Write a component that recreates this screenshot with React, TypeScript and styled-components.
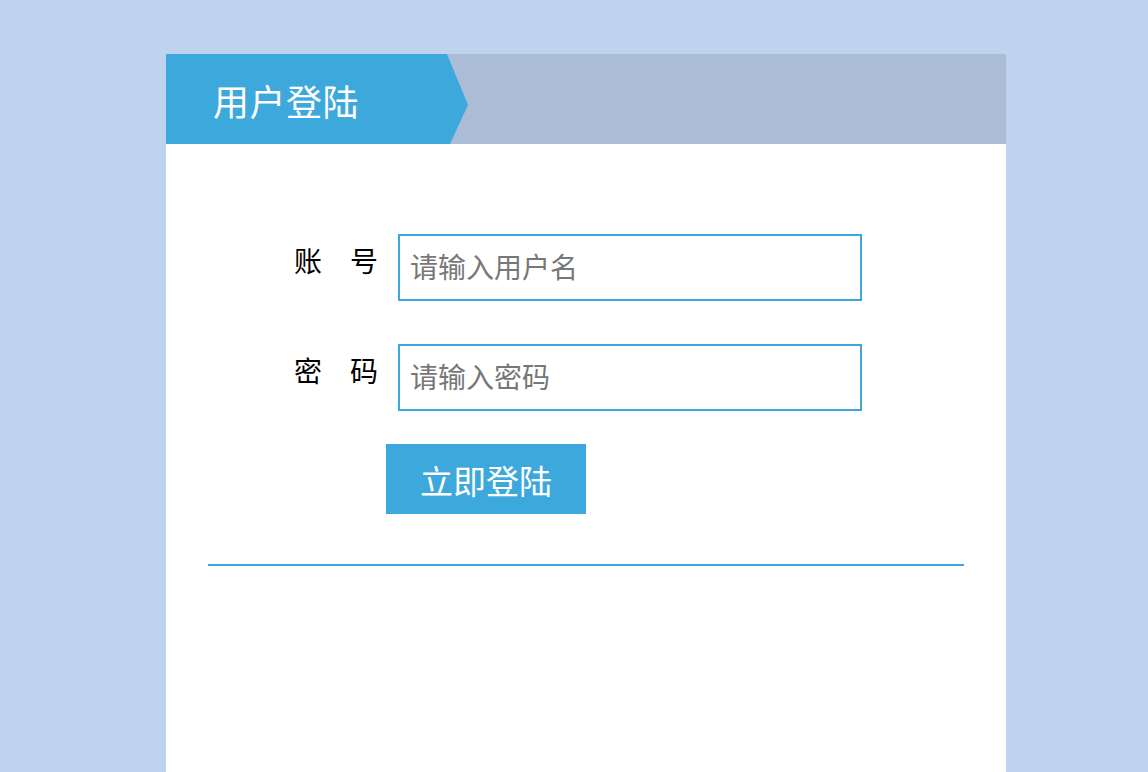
import React from "react";
import styled, { createGlobalStyle } from "styled-components";

const GlobalStyle = createGlobalStyle`
  html, body {
    margin: 0;
    padding: 0;
    background: #bdd3ee;
    font-family: "Noto Sans CJK SC", "Noto Sans", sans-serif;
  }
  * { box-sizing: border-box; }
`;

const Page = styled.div`
  width: 1148px;
  height: 772px;
  overflow: hidden;
  padding-top: 54px;
`;

const Card = styled.div`
  width: 840px;
  height: 760px;
  margin-left: 166px;
  background: #ffffff;
`;

const Header = styled.div`
  height: 90px;
  background: #abbdd6;
  display: flex;
`;

const Tab = styled.div`
  width: 302px;
  height: 90px;
  background: #3da8dc;
  clip-path: polygon(0 0, 281px 0, 302px 51px, 284px 90px, 0 90px);
  display: flex;
  align-items: center;
  padding-left: 47px;
  padding-top: 2px;
  color: #ffffff;
  font-size: 36px;
  letter-spacing: 0.5px;
`;

const Body = styled.div`
  padding: 90px 42px 0;
`;

const Form = styled.form`
  display: flex;
  flex-direction: column;
  gap: 43px;
  padding-left: 70px;
`;

const Row = styled.div`
  display: flex;
  align-items: center;
  gap: 20px;
`;

const Label = styled.label`
  width: 100px;
  text-align: right;
  font-size: 28px;
  color: #000000;
  padding-bottom: 16px;
  white-space: pre;
`;

const Input = styled.input`
  width: 464px;
  height: 67px;
  border: 2px solid #3fa6dc;
  outline: none;
  padding: 0 10px 4px;
  font-family: "Noto Sans CJK SC", "Noto Sans", sans-serif;
  font-size: 28px;
  color: #333;
  &::placeholder {
    color: #777777;
  }
`;

const Button = styled.button`
  width: 200px;
  height: 70px;
  margin-top: 33px;
  margin-left: 178px;
  border: none;
  background: #3da8dc;
  color: #ffffff;
  font-family: "Noto Sans CJK SC", "Noto Sans", sans-serif;
  font-size: 33px;
  padding-top: 2px;
  cursor: pointer;
  display: block;
`;

const Divider = styled.hr`
  margin: 50px 0 0;
  border: none;
  height: 2px;
  background: #3fa6dc;
`;

export default function App() {
  return (
    <>
      <GlobalStyle />
      <Page>
        <Card>
          <Header>
            <Tab>用户登陆</Tab>
          </Header>
          <Body>
            <Form onSubmit={(e) => e.preventDefault()}>
              <Row>
                <Label>账　号</Label>
                <Input placeholder="请输入用户名" />
              </Row>
              <Row>
                <Label>密　码</Label>
                <Input type="password" placeholder="请输入密码" />
              </Row>
            </Form>
            <Button type="button">立即登陆</Button>
            <Divider />
          </Body>
        </Card>
      </Page>
    </>
  );
}
